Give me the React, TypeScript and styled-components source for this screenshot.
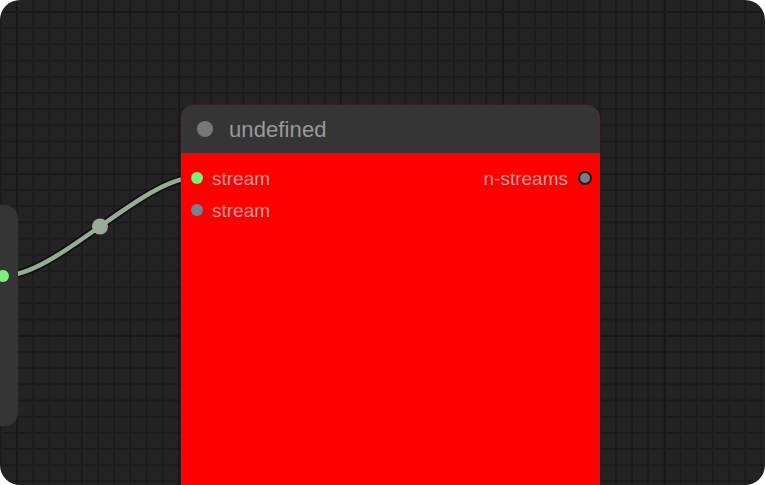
import styled, { createGlobalStyle } from "styled-components";

const GlobalStyle = createGlobalStyle`
  html, body {
    margin: 0;
    padding: 0;
    background: #ffffff;
  }
  body {
    font-family: "Liberation Sans", Arial, sans-serif;
  }
`;

type Slot = { label: string; color: string; side: "in" | "out" };

const inputs: Slot[] = [
  { label: "stream", color: "#7df07d", side: "in" },
  { label: "stream", color: "#778099", side: "in" },
];

const outputs: Slot[] = [{ label: "n-streams", color: "#777b8c", side: "out" }];

// link from the left node output to the first input
const linkPath = "M3 276 C57.5 276, 142.5 177, 197 177";

export default function App() {
  return (
    <>
      <GlobalStyle />
      <Canvas>
        <Links width={765} height={485} viewBox="0 0 765 485">
          <path d={linkPath} fill="none" stroke="rgba(0,0,0,0.55)" strokeWidth={8} />
          <path d={linkPath} fill="none" stroke="#9aaa98" strokeWidth={4.5} />
          <circle cx={100} cy={226.5} r={8} fill="#9aaa98" />
        </Links>

        <SideNode>
          <SideDot />
        </SideNode>

        <Node>
          <Header>
            <HeaderDot />
            <Title>undefined</Title>
          </Header>
          <Body>
            <SlotColumn>
              {inputs.map((s, i) => (
                <SlotRow key={i} $side={s.side}>
                  <SlotDot $color={s.color} />
                  <SlotLabel>{s.label}</SlotLabel>
                </SlotRow>
              ))}
            </SlotColumn>
            <SlotColumn>
              {outputs.map((s, i) => (
                <SlotRow key={i} $side={s.side}>
                  <SlotLabel>{s.label}</SlotLabel>
                  <SlotDot $color={s.color} $ring />
                </SlotRow>
              ))}
            </SlotColumn>
          </Body>
        </Node>
      </Canvas>
    </>
  );
}

const Canvas = styled.div`
  position: relative;
  width: 765px;
  height: 485px;
  overflow: hidden;
  border-radius: 20px;
  background-color: #232323;
  background-image:
    linear-gradient(to right, #181818 2px, transparent 2px),
    linear-gradient(to bottom, #181818 2px, transparent 2px),
    linear-gradient(to right, #1b1b1b 2px, transparent 2px),
    linear-gradient(to bottom, #1b1b1b 2px, transparent 2px);
  background-size: 162px 162px, 162px 162px, 16.2px 16.2px, 16.2px 16.2px;
  background-position: 16px 11px, 16px 11px, 16px 11px, 16px 11px;
`;

const Links = styled.svg`
  position: absolute;
  left: 0;
  top: 0;
`;

const SideNode = styled.div`
  position: absolute;
  left: -40px;
  top: 205px;
  width: 58px;
  height: 221px;
  background: #353535;
  border-radius: 0 13px 13px 0;
`;

const SideDot = styled.span`
  position: absolute;
  left: 37px;
  top: 65px;
  width: 12px;
  height: 12px;
  border-radius: 50%;
  background: #7df07d;
`;

const Node = styled.div`
  position: absolute;
  left: 181px;
  top: 105px;
  width: 419px;
  height: 420px;
  display: flex;
  flex-direction: column;
  border-radius: 13px 13px 0 0;
  overflow: hidden;
  box-shadow: 0 0 0 1px rgba(90, 20, 20, 0.25);
`;

const Header = styled.div`
  height: 48px;
  display: flex;
  align-items: center;
  gap: 16px;
  padding: 2px 0 0 16px;
  box-sizing: border-box;
  background: #353535;
`;

const HeaderDot = styled.span`
  width: 16px;
  height: 16px;
  margin-top: -2px;
  border-radius: 50%;
  background: #777777;
`;

const Title = styled.span`
  font-size: 22px;
  color: #999999;
  letter-spacing: 0.1px;
`;

const Body = styled.div`
  flex: 1;
  background: #ff0000;
  display: flex;
  justify-content: space-between;
  padding: 14px 8px 0 10px;
`;

const SlotColumn = styled.div`
  display: flex;
  flex-direction: column;
  gap: 10px;
`;

const SlotRow = styled.div<{ $side: "in" | "out" }>`
  display: flex;
  align-items: center;
  height: 22px;
  gap: ${(p) => (p.$side === "in" ? "9px" : "10px")};
  justify-content: ${(p) => (p.$side === "in" ? "flex-start" : "flex-end")};
`;

const SlotDot = styled.span<{ $color: string; $ring?: boolean }>`
  width: ${(p) => (p.$ring ? "14px" : "12px")};
  height: ${(p) => (p.$ring ? "14px" : "12px")};
  margin-top: -1px;
  border-radius: 50%;
  box-sizing: border-box;
  background: ${(p) => p.$color};
  border: ${(p) => (p.$ring ? "2px solid #1e1e1e" : "none")};
`;

const SlotLabel = styled.span`
  font-size: 19px;
  color: #c49a9a;
  padding-top: 2px;
`;
